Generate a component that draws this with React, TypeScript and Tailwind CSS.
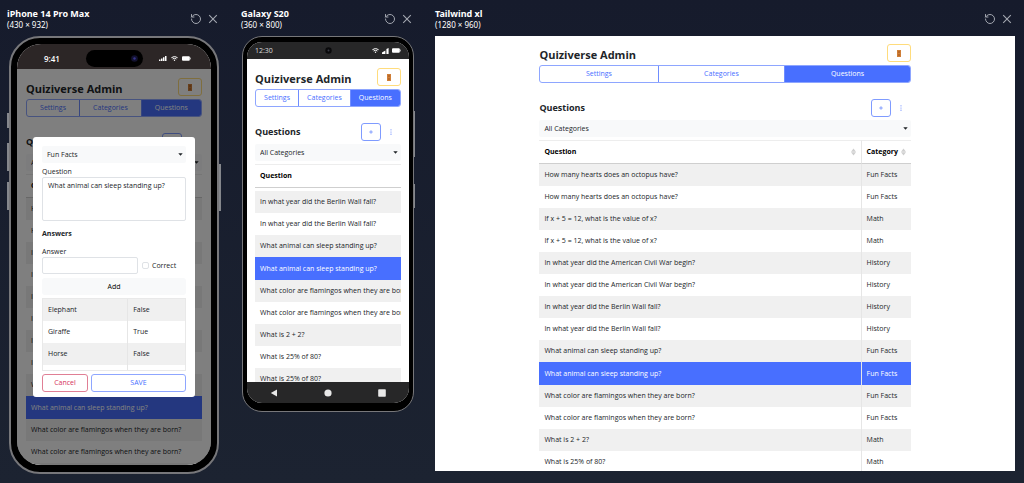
import React, { useState } from 'react';
import clsx from 'clsx';
import { RotateCcw } from 'lucide-react';

interface QuestionRow {
    question: string;
    category: string;
}

const questions: QuestionRow[] = [
    { question: 'How many hearts does an octopus have?', category: 'Fun Facts' },
    { question: 'How many hearts does an octopus have?', category: 'Fun Facts' },
    { question: 'If x + 5 = 12, what is the value of x?', category: 'Math' },
    { question: 'If x + 5 = 12, what is the value of x?', category: 'Math' },
    { question: 'In what year did the American Civil War begin?', category: 'History' },
    { question: 'In what year did the American Civil War begin?', category: 'History' },
    { question: 'In what year did the Berlin Wall fall?', category: 'History' },
    { question: 'In what year did the Berlin Wall fall?', category: 'History' },
    { question: 'What animal can sleep standing up?', category: 'Fun Facts' },
    { question: 'What animal can sleep standing up?', category: 'Fun Facts' },
    { question: 'What color are flamingos when they are born?', category: 'Fun Facts' },
    { question: 'What color are flamingos when they are born?', category: 'Fun Facts' },
    { question: 'What is 2 + 2?', category: 'Math' },
    { question: 'What is 25% of 80?', category: 'Math' },
    { question: 'What is 25% of 80?', category: 'Math' },
];

const SELECTED = 9;

const answers = [
    { text: 'Elephant', correct: 'False' },
    { text: 'Giraffe', correct: 'True' },
    { text: 'Horse', correct: 'False' },
];

const tabs = ['Settings', 'Categories', 'Questions'];

const SortIcon = () => (
    <svg width="5" height="8" viewBox="0 0 5 8" fill="#cfcfcf" aria-hidden="true">
        <path d="M2.5 0.5 5 3.8H0Z M2.5 7.5 5 4.2H0Z" />
    </svg>
);

const CategorySelect = ({ value, label }: { value: string; label: string }) => (
    <div className="relative">
        <select
            aria-label={label}
            defaultValue={value}
            className="block h-[17px] w-full appearance-none rounded-xs bg-[#f8f9fa] px-[5px] text-[7px] leading-[10px]"
        >
            <option>{value}</option>
        </select>
        <svg
            className="pointer-events-none absolute top-[7px] right-[3px]"
            width="5"
            height="3"
            viewBox="0 0 5 3"
            aria-hidden="true"
        >
            <path d="M0.3 0.2H4.7L2.5 2.7Z" fill="#212529" />
        </svg>
    </div>
);

interface AdminProps {
    className: string;
    wide?: boolean;
    scrollTo?: number;
}

const QuizAdmin = ({ className, wide, scrollTo = 0 }: AdminProps) => {
    const [tab, setTab] = useState('Questions');

    return (
        <div className={clsx('text-[7px] leading-[10px] text-[#212529]', className)}>
            <div className="flex h-[18px] items-center justify-between">
                <h1 className="pt-[2px] text-[11px] leading-[15px] font-bold whitespace-nowrap">
                    Quiziverse Admin
                </h1>
                <button
                    aria-label="Log out"
                    className="flex h-[18px] w-[24px] items-center justify-center rounded-[3px] border border-[#ffdc7c]"
                >
                    <svg width="4" height="7" viewBox="0 0 4 7">
                        <rect width="4" height="7" fill="#cf7f38" />
                        <path d="M1 1H3V3H1Z M1 4H3V6H1Z" fill="#bb6a29" />
                    </svg>
                </button>
            </div>

            <div className="mt-[3px] flex h-[18px] overflow-hidden rounded-[3px] border border-[#8ea6ff]">
                {tabs.map(name => (
                    <button
                        key={name}
                        onClick={() => setTab(name)}
                        className={clsx(
                            'flex-auto border-r border-[#6f8dff] last:border-r-0',
                            tab === name ? 'bg-[#486fff] text-white' : 'text-[#486fff]',
                        )}
                    >
                        {name}
                    </button>
                ))}
            </div>

            <div className="mt-4 flex h-[18px] items-center">
                <h2 className="mr-auto text-[9px] leading-[12px] font-bold">Questions</h2>
                <button
                    aria-label="Add question"
                    className="flex h-[18px] w-[20px] items-center justify-center rounded-[3px] border border-[#7f9bff] text-[#486fff]"
                >
                    <svg width="4" height="4" viewBox="0 0 4 4" stroke="#486fff">
                        <path d="M2 0.2V3.8M0.2 2H3.8" strokeWidth="0.6" />
                    </svg>
                </button>
                <button
                    aria-label="More"
                    className="flex h-[18px] w-[20px] items-center justify-center"
                >
                    <svg width="2" height="6" viewBox="0 0 2 6" fill="#6a89ff">
                        <circle cx="1" cy="0.8" r="0.6" />
                        <circle cx="1" cy="3" r="0.6" />
                        <circle cx="1" cy="5.2" r="0.6" />
                    </svg>
                </button>
            </div>

            <div className="mt-[3px]">
                <CategorySelect value="All Categories" label="Category" />
            </div>

            <table className="mt-[3px] w-full table-fixed border-separate border-spacing-0 text-left whitespace-nowrap">
                <thead>
                    <tr>
                        <th className="h-[24px] border-y border-t-[#ededed] border-b-[#cfcfcf] px-[5px] font-bold text-black">
                            <div className="flex items-center justify-between">
                                Question
                                {wide && <SortIcon />}
                            </div>
                        </th>
                        {wide && (
                            <th className="w-[50px] border-y border-l border-t-[#ededed] border-b-[#cfcfcf] border-l-[#e6e6e6] px-[5px] font-bold text-black">
                                <div className="flex items-center justify-between">
                                    Category
                                    <SortIcon />
                                </div>
                            </th>
                        )}
                    </tr>
                </thead>
                <tbody>
                    {scrollTo > 0 && (
                        <tr aria-hidden="true">
                            <td className="h-[3px] p-0" />
                        </tr>
                    )}
                    {questions.slice(scrollTo).map((row, i) => {
                        const index = i + scrollTo;
                        const selected = index === SELECTED;
                        return (
                            <tr
                                key={index}
                                className={clsx(
                                    selected
                                        ? 'h-[23px] bg-[#486fff] text-white'
                                        : 'h-[22px]',
                                    !selected && index % 2 === 0 && 'bg-[#f0f0f0]',
                                )}
                            >
                                <td className="overflow-hidden px-[5px] py-0">{row.question}</td>
                                {wide && (
                                    <td className="border-l border-[#e6e6e6] px-[5px] py-0">
                                        {row.category}
                                    </td>
                                )}
                            </tr>
                        );
                    })}
                </tbody>
            </table>
        </div>
    );
};

const QuestionDialog = () => (
    <form
        role="dialog"
        aria-label="Edit question"
        onSubmit={e => e.preventDefault()}
        className="mx-4 w-full rounded-[3px] bg-white px-[9px] pt-[9px] pb-[5px] text-[7px] leading-[10px] text-[#212529]"
    >
        <CategorySelect value="Fun Facts" label="Question category" />
        <label htmlFor="question" className="mt-1 block">
            Question
        </label>
        <textarea
            id="question"
            defaultValue="What animal can sleep standing up?"
            className="block h-[44px] w-full resize-none rounded-xs border border-[#dfe2e6] px-[5px] py-[3px]"
        />
        <h3 className="mt-2 font-bold">Answers</h3>
        <div className="mt-2 flex items-end">
            <div className="w-[96px]">
                <label htmlFor="answer" className="block">
                    Answer
                </label>
                <input
                    id="answer"
                    type="text"
                    className="block h-[17px] w-full rounded-xs border border-[#dfe2e6] px-[5px]"
                />
            </div>
            <label className="ml-1 flex h-[17px] items-center gap-[3px]">
                <input
                    type="checkbox"
                    className="h-[7px] w-[7px] appearance-none rounded-xs border border-[#dfe2e6] checked:bg-[#486fff]"
                />
                Correct
            </label>
        </div>
        <button
            type="button"
            className="mt-1 block h-[17px] w-full rounded-[3px] bg-[#f8f9fa] text-black"
        >
            Add
        </button>
        <div className="mt-[3px] h-[73px] overflow-hidden border border-[#e9e9e9]">
            <table className="w-full table-fixed border-separate border-spacing-0">
                <tbody>
                    {answers.map(answer => (
                        <tr key={answer.text} className="h-[22px] odd:bg-[#f0f0f0]">
                            <td className="w-3/5 border-r border-[#e6e6e6] px-[5px] py-0">
                                {answer.text}
                            </td>
                            <td className="px-[5px] py-0">{answer.correct}</td>
                        </tr>
                    ))}
                    <tr className="h-[22px]">
                        <td className="border-r border-[#e6e6e6]" />
                        <td />
                    </tr>
                </tbody>
            </table>
        </div>
        <div className="mt-[3px] flex h-[18px] gap-[3px]">
            <button
                type="button"
                className="w-[46px] rounded-[3px] border border-[#e07f95] text-[#d6335c]"
            >
                Cancel
            </button>
            <button
                type="submit"
                className="flex-1 rounded-[3px] border border-[#8ea6ff] text-[#486fff]"
            >
                SAVE
            </button>
        </div>
    </form>
);

const Battery = () => (
    <svg width="9" height="5" viewBox="0 0 9 5" fill="white">
        <rect x="0" y="0.3" width="7.8" height="4.4" rx="1" />
        <rect x="8.2" y="1.6" width="0.6" height="1.8" />
    </svg>
);

const Wifi = () => (
    <svg width="7" height="5" viewBox="0 0 7 5" fill="none" stroke="white">
        <path d="M0.4 1.7Q3.5 -0.8 6.6 1.7M1.6 3Q3.5 1.5 5.4 3" strokeWidth="1" />
        <circle cx="3.5" cy="4.2" r="0.7" fill="white" stroke="none" />
    </svg>
);

interface PaneProps {
    title: string;
    size: string;
    className: string;
    children: React.ReactNode;
}

const DevicePane = ({ title, size, className, children }: PaneProps) => (
    <section className={className}>
        <header className="flex h-9 items-start justify-between pt-2 pr-[3px] font-['Noto_Sans',sans-serif] text-white">
            <div className="whitespace-nowrap">
                <h2 className="text-[9px] leading-[12px] font-bold">{title}</h2>
                <p className="text-[8px] leading-[10px]">({size})</p>
            </div>
            <div className="flex items-center gap-[6px] pt-[5px] text-[#a3a7b0]">
                <button aria-label={`Reload ${title}`}>
                    <RotateCcw size={12} strokeWidth={2} />
                </button>
                <button aria-label={`Close ${title}`}>
                    <svg width="10" height="10" viewBox="0 0 10 10" stroke="currentColor">
                        <path d="M1.2 1.2 8.8 8.8M8.8 1.2 1.2 8.8" strokeWidth="1.1" />
                    </svg>
                </button>
            </div>
        </header>
        {children}
    </section>
);

const IPhone = () => (
    <div className="relative mx-[2px] rounded-[31px] border-2 border-[#77777a] bg-black px-[6px] pt-[6px] pb-[7px]">
        <span className="absolute top-[75px] -left-[4px] h-[15px] w-[2px] bg-[#85878c]" />
        <span className="absolute top-[105px] -left-[4px] h-[28px] w-[2px] bg-[#85878c]" />
        <span className="absolute top-[144px] -left-[4px] h-[28px] w-[2px] bg-[#85878c]" />
        <span className="absolute top-[126px] -right-[4px] h-[47px] w-[2px] bg-[#85878c]" />
        <div className="flex aspect-[194/421] flex-col overflow-hidden rounded-[24px] bg-white">
            <div className="flex h-[25px] shrink-0 items-center bg-[#2c2626] px-[20px] pt-[4px] text-white">
                <span className="w-[49px] pl-[7px] text-[8px] leading-[10px] font-semibold">9:41</span>
                <div className="flex h-[17px] w-[57px] items-center justify-end rounded-full bg-black pr-[5px]">
                    <svg width="7" height="7" viewBox="0 0 7 7">
                        <circle cx="3.5" cy="3.5" r="3.3" fill="#131230" />
                        <circle cx="3.5" cy="3.5" r="1.2" fill="#37358c" />
                    </svg>
                </div>
                <div className="ml-auto flex items-center gap-1">
                    <svg width="8" height="5" viewBox="0 0 8 5" fill="white">
                        <path d="M0 3.4H1.5V5H0Z M2 2.4H3.5V5H2Z M4 1.3H5.5V5H4Z M6 0H7.5V5H6Z" />
                    </svg>
                    <Wifi />
                    <Battery />
                </div>
            </div>
            <div className="relative min-h-0 flex-1 overflow-hidden">
                <QuizAdmin className="px-[9px] pt-[9px]" />
                <div className="absolute inset-0 flex items-center justify-center bg-black/50">
                    <QuestionDialog />
                </div>
            </div>
        </div>
    </div>
);

const Galaxy = () => (
    <div className="relative mx-px rounded-[20px] border border-[#77777a] bg-black px-1 pt-[5px] pb-2">
        <span className="absolute top-[74px] -right-[2px] h-[46px] w-px bg-[#85878c]" />
        <span className="absolute top-[147px] -right-[2px] h-[24px] w-px bg-[#85878c]" />
        <div className="flex aspect-[162/361] flex-col overflow-hidden rounded-[15px] bg-white">
            <div className="flex h-[17px] shrink-0 items-center justify-between bg-[#272728] px-2 text-white">
                <span className="w-[32px] text-[7px] leading-[10px] text-[#dddddd]">12:30</span>
                <svg width="7" height="7" viewBox="0 0 7 7">
                    <circle cx="3.5" cy="3.5" r="3.2" fill="#09090b" />
                    <circle cx="3.5" cy="3.5" r="1" fill="#3a3b45" />
                </svg>
                <div className="flex w-[32px] items-center justify-end gap-[3px]">
                    <Wifi />
                    <svg width="7" height="6" viewBox="0 0 7 6" fill="white">
                        <path d="M0 6V4.4L3.4 2.5V6Z M4.4 6V1L6.6 0V6Z" />
                    </svg>
                    <Battery />
                </div>
            </div>
            <div className="min-h-0 flex-1 overflow-hidden">
                <QuizAdmin className="px-2 pt-[9px]" scrollTo={6} />
            </div>
            <div className="flex h-[21px] shrink-0 items-center justify-around bg-[#272728]">
                <svg width="8" height="8" viewBox="0 0 8 8" fill="#e8e8e8">
                    <path d="M0.8 4 7 0.4V7.6Z" />
                </svg>
                <svg width="8" height="8" viewBox="0 0 8 8" fill="#e8e8e8">
                    <circle cx="4" cy="4" r="3.6" />
                </svg>
                <svg width="8" height="8" viewBox="0 0 8 8" fill="#e8e8e8">
                    <rect x="0.2" y="0.2" width="7.6" height="7.6" rx="0.8" />
                </svg>
            </div>
        </div>
    </div>
);

const App = () => {
    return (
        <main className="flex min-h-screen items-start gap-5 overflow-hidden bg-linear-to-b from-[#161b2c] to-[#1c2331] pr-[9px] pl-[7px] font-['Open_Sans','Noto_Sans',sans-serif]">
            <DevicePane title="iPhone 14 Pro Max" size="430 × 932" className="w-[214px] shrink-0">
                <IPhone />
            </DevicePane>
            <DevicePane title="Galaxy S20" size="360 × 800" className="w-[174px] shrink-0">
                <Galaxy />
            </DevicePane>
            <DevicePane title="Tailwind xl" size="1280 × 960" className="min-w-0 flex-1">
                <div className="aspect-[4/3] overflow-hidden bg-white">
                    <QuizAdmin wide className="mx-auto w-[64%] pt-2" />
                </div>
            </DevicePane>
        </main>
    );
};

export default App;
